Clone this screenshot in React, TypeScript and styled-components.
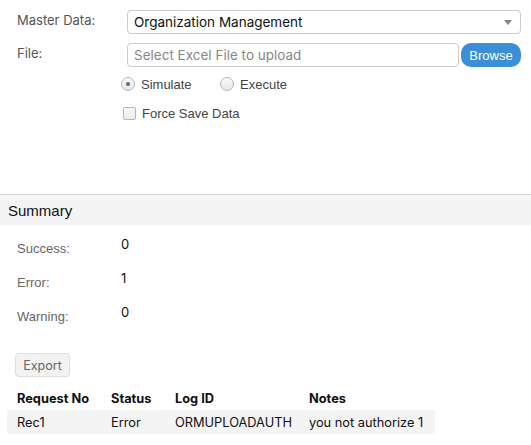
import React from 'react';
import styled, { createGlobalStyle } from 'styled-components';

const Global = createGlobalStyle`
  body {
    margin: 0;
    background: #fff;
    font-family: Inter, "Liberation Sans", Arial, sans-serif;
  }
`;

const Page = styled.div`
  width: 531px;
  height: 445px;
  overflow: hidden;
`;

const Form = styled.div`
  padding: 10px 10px 0 17px;
  height: 184px;
`;

const Row = styled.div<{ $mt?: number }>`
  display: flex;
  align-items: flex-start;
  margin-top: ${p => p.$mt ?? 0}px;
`;

const Label = styled.div`
  width: 110px;
  flex: none;
  font-size: 13px;
  color: #555;
  padding-top: 2px;
`;

const Control = styled.div`
  flex: 1;
  display: flex;
  gap: 2px;
`;

const Select = styled.div`
  flex: 1;
  height: 22px;
  border: 1px solid #ccc;
  border-radius: 4px;
  display: flex;
  align-items: center;
  justify-content: space-between;
  padding: 0 8px 0 6px;
  font-size: 13.5px;
  color: #111;
`;

const Caret = styled.span`
  width: 0;
  height: 0;
  border-left: 4px solid transparent;
  border-right: 4px solid transparent;
  border-top: 5px solid #888;
`;

const Input = styled.div`
  flex: 1;
  height: 22px;
  border: 1px solid #ccc;
  border-radius: 4px;
  display: flex;
  align-items: center;
  padding: 0 6px;
  font-size: 13.5px;
  color: #888;
`;

const Browse = styled.button`
  width: 60px;
  height: 24px;
  border: none;
  border-radius: 10px;
  background: #3a8fd6;
  color: #fff;
  font-family: "Liberation Sans", Arial, sans-serif;
  font-size: 13px;
  padding: 0;
`;

const Options = styled.div`
  display: flex;
  align-items: center;
  padding-left: 104px;
  font-family: "Liberation Sans", Arial, sans-serif;
  font-size: 13px;
  color: #444;
  height: 18px;
`;

const Option = styled.label<{ $w?: number }>`
  display: flex;
  align-items: center;
  gap: 6px;
  width: ${p => (p.$w ? `${p.$w}px` : 'auto')};
`;

const Radio = styled.span<{ $on?: boolean }>`
  width: 12px;
  height: 12px;
  border-radius: 50%;
  border: 1px solid #b5b5b5;
  background: linear-gradient(#fafafa, #e8e8e8);
  display: flex;
  align-items: center;
  justify-content: center;
  &::after {
    content: '';
    width: 4px;
    height: 4px;
    border-radius: 50%;
    background: ${p => (p.$on ? '#666' : 'transparent')};
  }
`;

const Check = styled.span`
  width: 11px;
  height: 11px;
  border: 1px solid #b5b5b5;
  border-radius: 2px;
  background: linear-gradient(#fafafa, #ebebeb);
  margin-left: 2px;
`;

const SummaryHead = styled.div`
  border-top: 1px solid #d6d6d6;
  background: #f4f4f4;
  height: 30px;
  display: flex;
  align-items: center;
  padding-left: 8px;
  font-family: "Liberation Sans", Arial, sans-serif;
  font-size: 15px;
  color: #111;
`;

const Stats = styled.div`
  padding: 9px 0 0 17px;
`;

const Stat = styled.div`
  display: flex;
  height: 34px;
  line-height: 16px;
`;

const StatLabel = styled.div`
  width: 104px;
  font-family: "Liberation Sans", Arial, sans-serif;
  font-size: 13px;
  color: #666;
  padding-top: 7px;
`;

const StatValue = styled.div`
  font-size: 13px;
  color: #111;
  padding-top: 2px;
`;

const Export = styled.button`
  margin: 17px 0 0 15px;
  width: 55px;
  height: 24px;
  border: 1px solid #ddd;
  border-radius: 4px;
  background: #f2f2f2;
  color: #666;
  font-family: Inter, sans-serif;
  font-size: 12.5px;
  padding: 0;
`;

const Table = styled.table`
  margin: 9px 0 0 7px;
  border-collapse: collapse;
  font-size: 12.8px;
  color: #111;
`;

const Th = styled.th<{ $w: number }>`
  width: ${p => p.$w}px;
  text-align: left;
  font-weight: 700;
  padding: 0 0 0 10px;
  height: 24px;
`;

const Td = styled.td`
  padding: 0 0 0 10px;
  height: 24px;
  background: #f4f4f4;
  white-space: nowrap;
`;

const App: React.FC = () => {
  return (
    <Page>
      <Global />
      <Form>
        <Row>
          <Label>Master Data:</Label>
          <Control>
            <Select>
              <span>Organization Management</span>
              <Caret />
            </Select>
          </Control>
        </Row>
        <Row $mt={9}>
          <Label>File:</Label>
          <Control>
            <Input>Select Excel File to upload</Input>
            <Browse>Browse</Browse>
          </Control>
        </Row>
        <Row $mt={8}>
          <Options>
            <Option $w={99}>
              <Radio $on />
              Simulate
            </Option>
            <Option>
              <Radio />
              Execute
            </Option>
          </Options>
        </Row>
        <Row $mt={11}>
          <Options>
            <Option>
              <Check />
              Force Save Data
            </Option>
          </Options>
        </Row>
      </Form>
      <SummaryHead>Summary</SummaryHead>
      <Stats>
        <Stat>
          <StatLabel>Success:</StatLabel>
          <StatValue>0</StatValue>
        </Stat>
        <Stat>
          <StatLabel>Error:</StatLabel>
          <StatValue>1</StatValue>
        </Stat>
        <Stat>
          <StatLabel>Warning:</StatLabel>
          <StatValue>0</StatValue>
        </Stat>
      </Stats>
      <Export>Export</Export>
      <Table>
        <thead>
          <tr>
            <Th $w={84}>Request No</Th>
            <Th $w={54}>Status</Th>
            <Th $w={124}>Log ID</Th>
            <Th $w={126}>Notes</Th>
          </tr>
        </thead>
        <tbody>
          <tr>
            <Td>Rec1</Td>
            <Td>Error</Td>
            <Td>ORMUPLOADAUTH</Td>
            <Td>you not authorize 1</Td>
          </tr>
        </tbody>
      </Table>
    </Page>
  );
};

export default App;
